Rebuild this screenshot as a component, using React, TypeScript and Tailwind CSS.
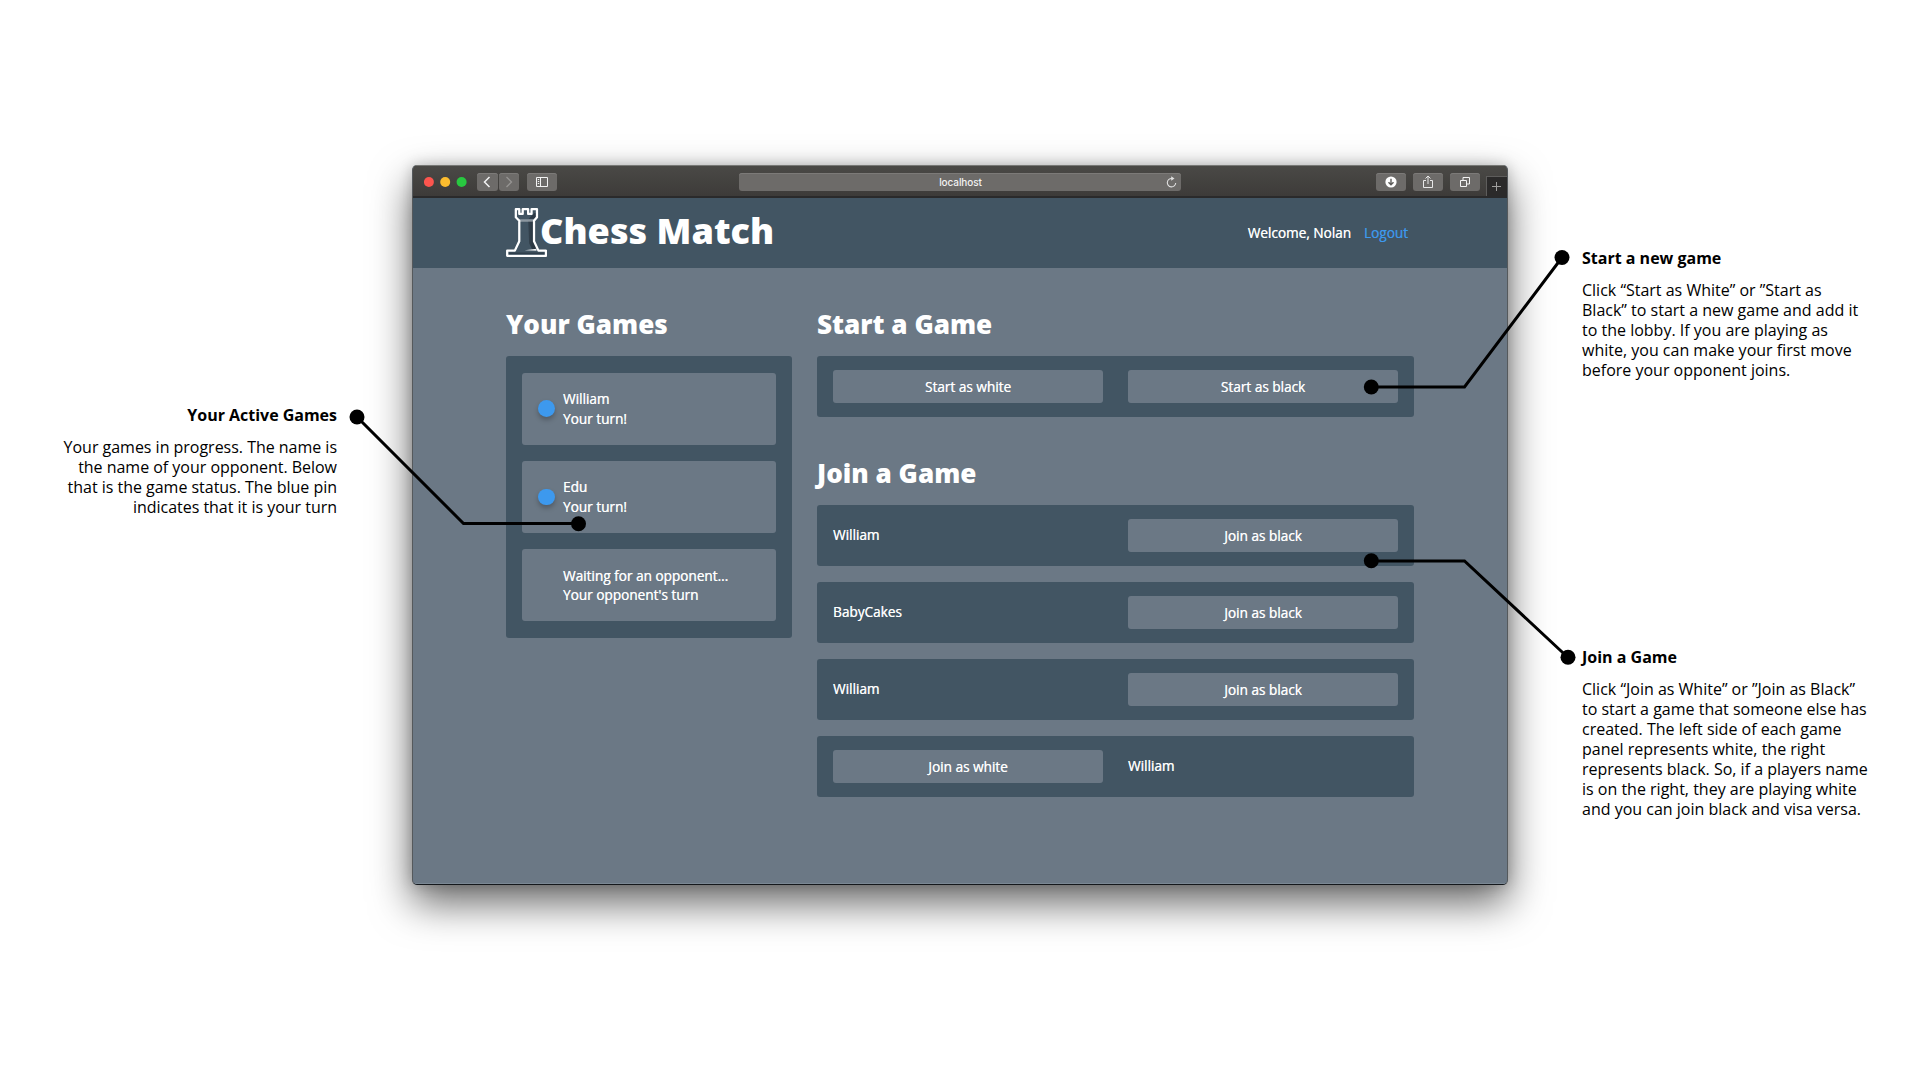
import React from 'react';

const Dot = () => <div className="h-[16.500px] w-[16.500px] rounded-full bg-[#3d99ee] shadow-[0_3px_5px_rgba(0,0,0,0.25)]" />;

const label = 'text-[13.600px] font-medium [text-shadow:0.350px_0_0_rgba(255,255,255,0.8)]';

function GameCard({ name, status, active }: { name: string; status: string; active: boolean }) {
  return (
    <div className="flex h-[72px] items-center rounded-[3px] bg-[#6b7885] pl-[16.400px]">
      <div className="w-[24.600px] shrink-0">{active && <Dot />}</div>
      <div className={`relative top-[0.300px] leading-[19.700px] ${label}`}>
        <div>{name}</div>
        <div>{status}</div>
      </div>
    </div>
  );
}

function Slot({ text, button }: { text: string; button?: boolean }) {
  if (button) {
    return (
      <button className={`flex h-[33px] w-[270px] items-center justify-center rounded-[3px] bg-[#6b7885] pt-px ${label}`}>
        {text}
      </button>
    );
  }
  return <div className={`w-[270px] pb-0.5 leading-[32px] ${label}`}>{text}</div>;
}

function Row({ children }: { children?: React.ReactNode }) {
  return <div className="flex h-[61px] items-center justify-between rounded-[3px] bg-[#425563] px-4">{children}</div>;
}

const rows: [string, boolean, string, boolean][] = [
  ['William', false, 'Join as black', true],
  ['BabyCakes', false, 'Join as black', true],
  ['William', false, 'Join as black', true],
  ['Join as white', true, 'William', false],
];

function Rook() {
  return (
    <svg width="41.300" height="49" viewBox="0 0 42 50" preserveAspectRatio="none" fill="none" className="relative -top-[0.500px] -left-[0.500px] shrink-0">
      <defs>
        <linearGradient id="shade" x1="0" x2="1">
          <stop offset="0" stopColor="#34434f" />
          <stop offset="0.5" stopColor="#2a3640" />
          <stop offset="1" stopColor="#25303a" />
        </linearGradient>
      </defs>
      <path d="M22.500 13H28L28.500 33L33 43H27L23.500 36Z" fill="url(#shade)" />
      <path d="M13 11.500H30L27 14H14Z" fill="#d5dade" opacity=".5" />
      <path d="M29 5H31V9L28 11H23Z" fill="#2c3945" />
      <path d="M19 43L31 41.500V43.500Z" fill="#eef1f3" />
      <path d="M10 1.200H13.500V6H17V1.200H22.500V6H26V1.200H31.500V9.500L28.500 13V34L33 43.500H40.600V48.800H1.200V43.500H9L13.500 34V13L10 9.500Z" stroke="#fff" strokeWidth="2.3" strokeLinejoin="round" />
      <path d="M3 46.200H39" stroke="#2f3e4b" strokeWidth="1.800" />
    </svg>
  );
}

const tool = 'flex h-[18px] items-center justify-center rounded-[3px] bg-[#6d6b69] shadow-[inset_0_1px_0_#7c7a78]';

function Toolbar() {
  return (
    <div className="relative flex h-[33px] shrink-0 border-t border-b-2 border-t-[#777875] border-b-[#2a2a2b] bg-linear-to-b from-[#4a4946] to-[#3d3b39] pt-[7px] pl-[11px]">
      <svg className="mt-[3px]" width="43" height="12">
        <circle cx="4.900" cy="6" r="5" fill="#fc554e" />
        <circle cx="21.200" cy="6" r="5" fill="#fcbc2e" />
        <circle cx="37.600" cy="6" r="5" fill="#28c840" />
      </svg>
      <div className="ml-[10px] flex gap-px">
        <div className={`${tool} w-[20.500px]`}>
          <svg width="8" height="12" fill="none" stroke="#f3f3f3" strokeWidth="1.500"><path d="M6.500 1L1.500 6L6.500 11" /></svg>
        </div>
        <div className={`${tool} w-[20.500px]`}>
          <svg width="8" height="12" fill="none" stroke="#969492" strokeWidth="1.300"><path d="M1.500 1L6.500 6L1.500 11" /></svg>
        </div>
      </div>
      <div className={`${tool} ml-2 w-[30px]`}>
        <svg width="12" height="10" fill="none" stroke="#f3f3f3"><path d="M.5.500H11.500V9.500H.5ZM4.500.500V9.500M1.800 2.500H3.200M1.800 4.500H3.200M1.800 6.500H3.200" /></svg>
      </div>
      <div className={`${tool} relative ml-[182px] w-[442px] font-['Inter',sans-serif] text-[10px] font-medium text-[#f2f2f2]`}>
        <span className="relative left-[0.500px] tracking-[-0.100px]">localhost</span>
        <svg className="absolute top-[3px] right-[4px]" width="11" height="13" fill="none" stroke="#e0e0e0" strokeWidth="1.100"><path d="M6 2.500A4.200 4.200 0 1 0 9.700 7" /><path d="M5.200.300L8.500 2.600L5.200 4.800Z" fill="#e0e0e0" stroke="none" /></svg>
      </div>
      <div className={`${tool} ml-[195px] w-[30px]`}>
        <svg width="12" height="12"><circle cx="6" cy="6" r="5.600" fill="#fff" /><path d="M6 2.800V8.800M3.500 6.200L6 8.800L8.500 6.200" stroke="#5e5d5b" strokeWidth="1.400" fill="none" /></svg>
      </div>
      <div className={`${tool} ml-[7px] w-[30px]`}>
        <svg width="12" height="14" fill="none" stroke="#e8e8e8"><path d="M4 5.500H1.500V12.500H10.500V5.500H8M6 9V1.200M3.500 3.500L6 1L8.500 3.500" /></svg>
      </div>
      <div className={`${tool} ml-[7px] w-[30px]`}>
        <svg width="12" height="12" fill="none" stroke="#f3f3f3"><path d="M1.500 4.500H7.500V10.500H1.500ZM4 4.500V1.500H10.500V8H7.500" /></svg>
      </div>
      <div className="absolute right-0 bottom-0 flex h-5 w-[21px] items-center justify-center border-t border-l border-[#5e5d5c] bg-[#2b2a2a] pr-px">
        <svg width="9" height="9" stroke="#a09f9e"><path d="M4.500 0V9M0 4.500H9" /></svg>
      </div>
    </div>
  );
}

const h2 = 'relative -top-px text-[26.100px] leading-[36px] font-extrabold';

function BrowserWindow() {
  return (
    <div className="mt-[165px] flex h-[720px] w-[1096px] shrink-0 flex-col overflow-hidden rounded-[5px] border-x border-b border-x-[#55595c] border-b-[#14181c] bg-[#6b7885] text-white shadow-[0_18px_40px_rgba(0,0,0,0.6),0_0_14px_rgba(0,0,0,0.2)]">
      <Toolbar />
      <header className="flex h-[70px] shrink-0 items-center bg-[#425563] pr-[99px] pl-[93px]">
        <Rook />
        <h1 className="relative -top-[3px] -ml-[7.300px] text-[36.100px] leading-[48px] font-extrabold">Chess Match</h1>
        <div className={`ml-auto flex gap-[13px] ${label}`}>
          <span>Welcome, Nolan</span>
          <span className="text-[#3d99ee] [text-shadow:0.350px_0_0_rgba(61,153,238,0.6)]">Logout</span>
        </div>
      </header>
      <main className="flex grow gap-[25px] border-b border-[#7b8894] pt-[39px] pl-[93px]">
        <section className="w-[286px]">
          <h2 className={h2}>Your Games</h2>
          <div className="mt-[13px] flex h-[282px] flex-col gap-[16.300px] rounded-[3px] bg-[#425563] p-4 pt-[16.500px]">
            <GameCard name="William" status="Your turn!" active />
            <GameCard name="Edu" status="Your turn!" active />
            <GameCard name="Waiting for an opponent..." status="Your opponent's turn" active={false} />
          </div>
        </section>
        <section className="w-[597px]">
          <h2 className={h2}>Start a Game</h2>
          <div className="mt-[13px]"><Row><Slot text="Start as white" button /><Slot text="Start as black" button /></Row></div>
          <h2 className={`${h2} mt-[39px]`}>Join a Game</h2>
          <div className="mt-[13px] flex flex-col gap-4">
            {rows.map(([a, ab, b, bb], i) => (
              <Row key={i}><Slot text={a} button={ab} /><Slot text={b} button={bb} /></Row>
            ))}
          </div>
        </section>
      </main>
    </div>
  );
}

function Note({ title, lines }: { title: string; lines: string[] }) {
  return (
    <div className="text-[16px] leading-5 whitespace-nowrap text-black">
      <h3 className="font-bold">{title}</h3>
      <div className="mt-3">{lines.map((l) => <div key={l}>{l}</div>)}</div>
    </div>
  );
}

export default function App() {
  return (
    <div className="relative flex h-[1080px] w-[1920px] overflow-hidden bg-white font-['Open_Sans',sans-serif]">
      <aside className="mr-[75px] w-[337px] shrink-0 pt-[405px] text-right tracking-[-0.020px]">
        <Note title="Your Active Games" lines={['Your games in progress. The name is', 'the name of your opponent. Below', 'that is the game status. The blue pin', 'indicates that it is your turn']} />
      </aside>
      <BrowserWindow />
      <aside className="ml-[74px] flex shrink-0 flex-col gap-[267px] pt-[248px]">
        <Note title="Start a new game" lines={['Click “Start as White” or ”Start as', 'Black” to start a new game and add it', 'to the lobby. If you are playing as', 'white, you can make your first move', 'before your opponent joins.']} />
        <Note title="Join a Game" lines={['Click “Join as White” or ”Join as Black”', 'to start a game that someone else has', 'created. The left side of each game', 'panel represents white, the right', 'represents black. So, if a players name', 'is on the right, they are playing white', 'and you can join black and visa versa.']} />
      </aside>
      <svg className="pointer-events-none absolute inset-0" width="1920" height="1080" fill="none" stroke="#000" strokeWidth="3">
        <path d="M357 417L463.500 523.500H578M1562 257.500L1464.500 387H1371M1568 657.500L1464.500 561H1371" />
        <g fill="#000" stroke="none">
          <circle cx="357" cy="417" r="7.500" /><circle cx="578.500" cy="523.700" r="7.500" />
          <circle cx="1562" cy="257.500" r="7.500" /><circle cx="1371.300" cy="387" r="7.500" />
          <circle cx="1568" cy="657.300" r="7.500" /><circle cx="1371.300" cy="560.700" r="7.500" />
        </g>
      </svg>
    </div>
  );
}
